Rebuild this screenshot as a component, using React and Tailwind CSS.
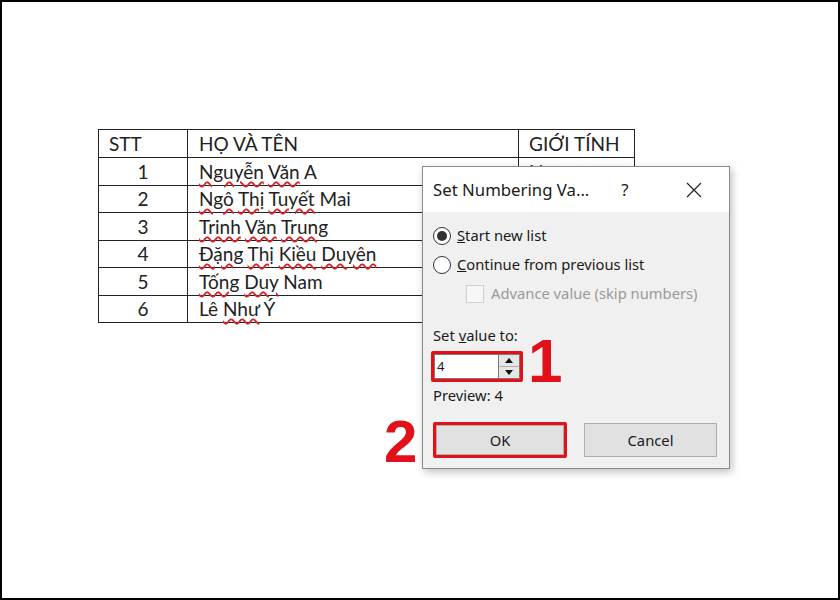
import React from "react";

const rows = [
  { n: 1, name: [["Nguyễn", true], ["Văn", true], ["A", false]], sex: "Nam" },
  { n: 2, name: [["Ngô", true], ["Thị", true], ["Tuyết", true], ["Mai", false]], sex: "" },
  { n: 3, name: [["Trinh", true], ["Văn", true], ["Trung", true]], sex: "" },
  { n: 4, name: [["Đặng", true], ["Thị", true], ["Kiều", true], ["Duyên", true]], sex: "" },
  { n: 5, name: [["Tống", true], ["Duy", true], ["Nam", false]], sex: "" },
  { n: 6, name: [["Lê", false], ["Như", true], ["Ý", false]], sex: "" },
];

function Name({ parts }) {
  return (
    <span>
      {parts.map(([w, wavy], i) => (
        <React.Fragment key={i}>
          {i > 0 && " "}
          <span className={wavy ? "underline decoration-wavy decoration-[#d6262b] decoration-[1.5px] underline-offset-[2px]" : ""}>{w}</span>
        </React.Fragment>
      ))}
    </span>
  );
}

function Radio({ checked }) {
  return (
    <span className="w-[18px] h-[18px] rounded-full border border-[#333] bg-white flex items-center justify-center shrink-0">
      {checked && <span className="w-[10px] h-[10px] rounded-full bg-[#333]" />}
    </span>
  );
}

export default function App() {
  return (
    <div className="w-[840px] h-[600px] border-2 border-black bg-white relative overflow-hidden pt-[127px] pl-[96px]">
      {/* table in the document */}
      <table className="border-collapse text-[19px] text-[#222]" style={{ fontFamily: "Lato, 'Noto Sans', sans-serif" }}>
        <tbody>
          <tr className="h-[28px] leading-none">
            <td className="border border-[#222] w-[89px] pl-[10px]">STT</td>
            <td className="border border-[#222] w-[331px] pl-[11px]">HỌ VÀ TÊN</td>
            <td className="border border-[#222] w-[116px] pl-[10px]">GIỚI TÍNH</td>
          </tr>
          {rows.map((r) => (
            <tr key={r.n} className="h-[27.5px] leading-none">
              <td className="border border-[#222] text-center">{r.n}</td>
              <td className="border border-[#222] pl-[11px]"><Name parts={r.name} /></td>
              <td className="border border-[#222] pl-[10px]">{r.sex}</td>
            </tr>
          ))}
        </tbody>
      </table>

      {/* dialog window */}
      <div
        className="absolute left-[420px] top-[164px] w-[308px] h-[303px] border border-[#8a8a8a] bg-[#f0f0f0] shadow-[2px_3px_8px_rgba(0,0,0,0.25)] text-[14.75px] text-[#1a1a1a] flex flex-col"
        style={{ fontFamily: "'Noto Sans', 'Open Sans', sans-serif" }}
      >
        <div className="h-[45px] bg-white flex items-center pl-[10px] shrink-0">
          <span className="text-[16.75px] flex-1">Set Numbering Va...</span>
          <span className="text-[16.75px] w-[20px] text-center mr-[51px]">?</span>
          <svg width="16" height="16" viewBox="0 0 16 16" className="mr-[27px]">
            <path d="M1 1L15 15M15 1L1 15" stroke="#222" strokeWidth="1.2" />
          </svg>
        </div>

        <div className="flex flex-col pl-[10px] pt-[9px]">
          <div className="h-[29px] flex items-center gap-[6px]">
            <Radio checked />
            <span><span className="underline">S</span>tart new list</span>
          </div>
          <div className="h-[29px] flex items-center gap-[6px]">
            <Radio />
            <span><span className="underline">C</span>ontinue from previous list</span>
          </div>
          <div className="h-[29px] flex items-center gap-[7px] pl-[33px]">
            <span className="w-[18px] h-[18px] border border-[#cfcfcf] bg-[#f7f7f7] shrink-0" />
            <span className="text-[#9a9a9a]">Advance value (skip numbers)</span>
          </div>

          <div className="h-[22px] flex items-center mt-[16px]">
            Set <span className="underline ml-[4px]">v</span>alue to:
          </div>

          <div className="flex items-center mt-[5px]">
            <div className="w-[92px] h-[31px] border-[3px] border-[#e3101a] rounded-[2px] -ml-[2px] flex">
              <div className="flex-1 bg-white flex items-center pl-[2px] text-[13px] border border-[#7a7a7a] border-r-0">4</div>
              <div className="w-[22px] flex flex-col border border-[#7a7a7a] bg-white">
                <div className="flex-1 bg-[#e6e6e6] border-b border-[#b0b0b0] flex items-center justify-center">
                  <svg width="8" height="5" viewBox="0 0 8 5"><path d="M0 5L4 0L8 5Z" fill="#111" /></svg>
                </div>
                <div className="flex-1 bg-[#e6e6e6] flex items-center justify-center">
                  <svg width="8" height="5" viewBox="0 0 8 5"><path d="M0 0L4 5L8 0Z" fill="#111" /></svg>
                </div>
              </div>
            </div>
          </div>

          <div className="h-[22px] flex items-center mt-[2px]">Preview: 4</div>

          <div className="flex items-center mt-[16px] gap-[17px]">
            <div className="w-[134px] h-[36px] border-[3px] border-[#e3101a] rounded-[2px] bg-[#e1e1e1] flex items-center justify-center">
              <div className="w-full h-full border border-[#adadad] flex items-center justify-center">OK</div>
            </div>
            <div className="w-[133px] h-[34px] border border-[#adadad] bg-[#e1e1e1] flex items-center justify-center">Cancel</div>
          </div>
        </div>
      </div>

      {/* annotation numbers */}
      <span
        className="absolute left-[526px] top-[328px] text-[62px] font-bold text-[#e3101a] leading-none"
        style={{ fontFamily: "'Liberation Sans', Arial, sans-serif" }}
      >
        1
      </span>
      <span
        className="absolute left-[382px] top-[410px] text-[60px] font-bold text-[#e3101a] leading-none"
        style={{ fontFamily: "'Liberation Sans', Arial, sans-serif" }}
      >
        2
      </span>
    </div>
  );
}
